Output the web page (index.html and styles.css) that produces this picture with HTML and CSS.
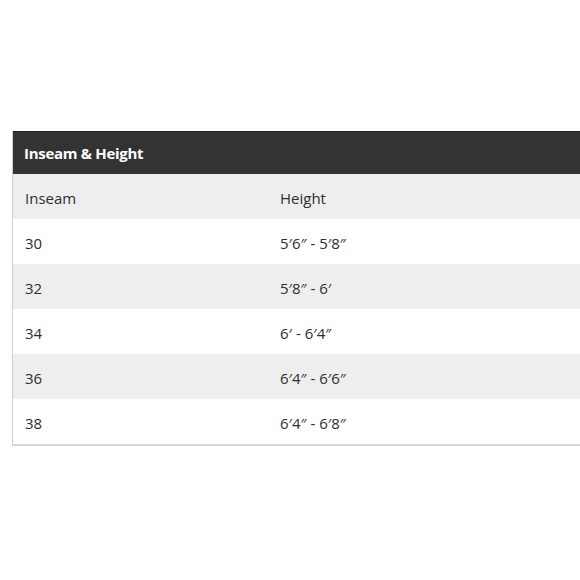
FILE: index.html
```html
<!DOCTYPE html>
<html>
<head>
<meta charset="utf-8">
<link rel="stylesheet" href="styles.css">
</head>
<body>
<div class="page">
  <div class="chart">
    <div class="title">Inseam &amp; Height</div>
    <div class="row head"><span class="c1">Inseam</span><span class="c2">Height</span></div>
    <div class="row"><span class="c1">30</span><span class="c2">5′6″ - 5′8″</span></div>
    <div class="row alt"><span class="c1">32</span><span class="c2">5′8″ - 6′</span></div>
    <div class="row"><span class="c1">34</span><span class="c2">6′ - 6′4″</span></div>
    <div class="row alt"><span class="c1">36</span><span class="c2">6′4″ - 6′6″</span></div>
    <div class="row"><span class="c1">38</span><span class="c2">6′4″ - 6′8″</span></div>
  </div>
</div>
</body>
</html>
```
FILE: styles.css
```css
html, body {
  margin: 0;
  padding: 0;
  background: #fff;
  overflow: hidden;
}
.page {
  width: 580px;
  height: 580px;
  padding: 131px 0 0 12px;
  box-sizing: border-box;
  overflow: hidden;
  font-family: "Open Sans", "Liberation Sans", sans-serif;
  color: #2e2e2e;
}
.chart {
  width: 620px;
  border-left: 1px solid #cfcfcf;
  border-bottom: 2px solid #d4d4d4;
}
.title {
  height: 43px;
  background: #333;
  color: #fff;
  font-weight: 700;
  font-size: 15px;
  letter-spacing: -0.3px;
  display: flex;
  align-items: center;
  padding-left: 11px;
  border-top: 1px solid #222;
  box-sizing: border-box;
}
.row {
  height: 45px;
  display: flex;
  align-items: center;
  font-size: 15px;
  padding-top: 3px;
  box-sizing: border-box;
  background: #fff;
}
.row.head, .row.alt {
  background: #eeeeee;
}
.c1 {
  width: 255px;
  padding-left: 12px;
}
.c2 {
  flex: 1;
}
```
